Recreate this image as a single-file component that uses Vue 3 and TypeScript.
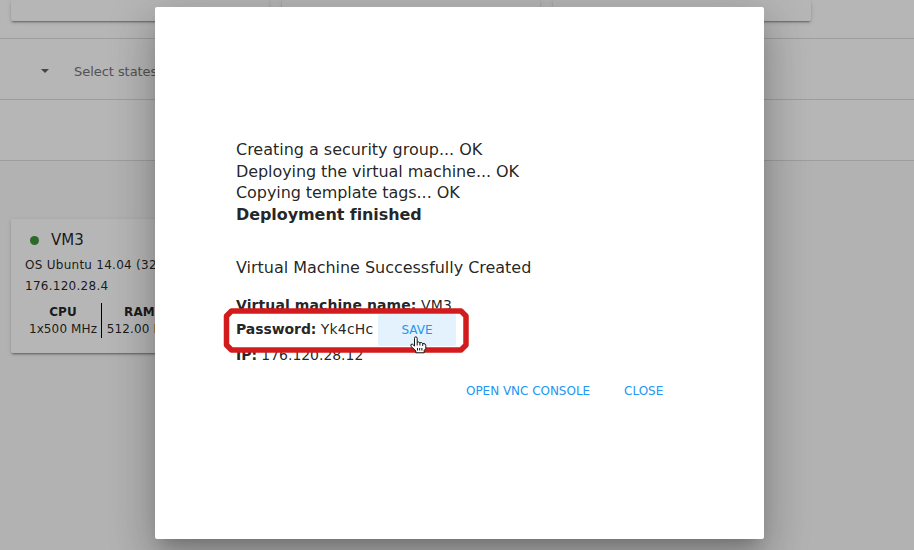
<script setup lang="ts">
interface Stat {
  label: string
  value: string
}

const steps: string[] = [
  'Creating a security group... OK',
  'Deploying the virtual machine... OK',
  'Copying template tags... OK',
]

const stats: Stat[] = [
  { label: 'CPU', value: '1x500 MHz' },
  { label: 'RAM', value: '512.00 MB' },
]

const topCards: number[] = [1, 2, 3]
</script>

<template>
  <div class="screen">
    <main class="page">
      <section class="toolbar">
        <div class="card-row">
          <div v-for="card in topCards" :key="card" class="card top-card"></div>
        </div>
        <div class="filter">
          <span class="caret"></span>
          <span class="placeholder">Select states</span>
        </div>
        <div class="filter"></div>
      </section>
      <article class="card vm">
        <h3 class="vm-name"><span class="dot"></span>VM3</h3>
        <p class="vm-line">OS Ubuntu 14.04 (32-bit)</p>
        <p class="vm-line">176.120.28.4</p>
        <div class="stats">
          <div v-for="stat in stats" :key="stat.label" class="stat">
            <b>{{ stat.label }}</b>
            <span>{{ stat.value }}</span>
          </div>
        </div>
      </article>
    </main>

    <div class="backdrop">
      <section class="dialog" role="dialog">
        <div class="steps">
          <div v-for="step in steps" :key="step">{{ step }}</div>
          <b>Deployment finished</b>
        </div>
        <p class="success">Virtual Machine Successfully Created</p>
        <div class="info name"><b>Virtual machine name:</b> VM3</div>
        <div class="info password">
          <span class="secret"><b>Password:</b> <span class="value">Yk4cHc</span></span>
          <button class="save" type="button">SAVE</button>
          <svg class="highlight" width="246" height="46" viewBox="0 0 246 46">
            <path d="M8.500 3H238L243 8V37L238 42H8.500L3.500 37V8Z" />
          </svg>
          <svg class="pointer" width="17" height="18" viewBox="0 0 17 18">
            <path d="M4.500 10V2.500Q4.500 .8 5.800 .8T7.200 2.500V6.500Q8.800 5.200 9.900 6.800Q11.500 5.900 12.700 7.500Q15.800 7.200 15.800 9.500V12.500L14.200 14.500V16.800H5.800V14.800L1 10.500Q.2 8 2.200 8L4.500 10" />
            <path d="M7.200 6.500V9.500M9.900 7V9.500M12.700 7.500V10M7.500 12V14.500M9.700 12V14.500M11.900 12V14.500" />
          </svg>
        </div>
        <div class="info ip"><b>IP:</b> 176.120.28.12</div>
        <div class="actions">
          <button type="button">OPEN VNC CONSOLE</button>
          <button type="button">CLOSE</button>
        </div>
      </section>
    </div>
  </div>
</template>

<style>
body {
  margin: 0;
  overflow: hidden;
}
</style>

<style scoped>
.screen {
  position: relative;
  width: 914px;
  height: 550px;
  overflow: hidden;
  color: rgba(0, 0, 0, 0.87);
  font-family: "DejaVu Sans", sans-serif;
}
.screen * {
  box-sizing: border-box;
}
.page {
  height: 550px;
  background: #fafafa;
}
.toolbar {
  background: #fff;
}
.card {
  background: #fff;
  border-radius: 2px;
  box-shadow: 0 3px 1px -2px rgba(0, 0, 0, 0.2), 0 2px 2px rgba(0, 0, 0, 0.14), 0 1px 5px rgba(0, 0, 0, 0.12);
}
.card-row {
  display: flex;
  gap: 12.5px;
  height: 39px;
  padding: 0 11px 17px;
  border-bottom: 1px solid #dcdcdc;
}
.top-card {
  width: 258.3px;
  height: 21px;
}
.filter {
  display: flex;
  align-items: center;
  height: 61px;
  padding: 5px 0 0 41px;
  border-bottom: 1px solid #dcdcdc;
}
.caret {
  margin-top: -1px;
  border: 4px solid transparent;
  border-top-color: #616161;
  border-bottom: 0;
}
.filter:last-child {
  padding: 0;
}
.placeholder {
  margin-left: 25px;
  color: #757575;
  font-size: 13px;
  letter-spacing: -0.05px;
}
.vm {
  width: 259px;
  height: 134px;
  margin: 58px 0 0 11px;
  padding: 10px 14px;
}
.vm-name {
  display: flex;
  align-items: center;
  height: 22px;
  margin: 0 0 4px;
  font-size: 15px;
  font-weight: 400;
}
.dot {
  width: 9px;
  height: 9px;
  margin: 1px 12px 0 5px;
  border-radius: 50%;
  background: #3c963e;
}
.vm-line {
  margin: 0;
  font-size: 12px;
  letter-spacing: 0.27px;
  line-height: 21px;
  white-space: nowrap;
}
.stats {
  display: flex;
  margin-top: 6px;
  font-size: 12px;
  letter-spacing: 0.12px;
  line-height: 17px;
}
.stat {
  display: flex;
  flex-direction: column;
  width: 76px;
  height: 35px;
  padding-top: 1px;
  text-align: center;
  white-space: nowrap;
}
.stat + .stat {
  border-left: 1px solid #000;
}
.backdrop {
  position: absolute;
  inset: 0;
  padding: 7px 0 0 155px;
  background: rgba(0, 0, 0, 0.288);
}
.dialog {
  width: 609px;
  height: 532px;
  padding: 132px 81px 0;
  border-radius: 2px;
  background: #fff;
  box-shadow: 0 11px 15px -7px rgba(0, 0, 0, 0.2), 0 24px 38px 3px rgba(0, 0, 0, 0.14), 0 9px 46px 8px rgba(0, 0, 0, 0.12);
}
.steps {
  font-size: 16px;
  letter-spacing: -0.08px;
  line-height: 21.6px;
}
.steps div:first-child {
  letter-spacing: -0.02px;
}
.success {
  margin: 32px 0 0;
  font-size: 16px;
  letter-spacing: -0.03px;
  line-height: 22px;
}
.info {
  margin-top: 17px;
  font-size: 14px;
  line-height: 18px;
}
.name {
  letter-spacing: 0.09px;
}
.password {
  position: relative;
  display: flex;
  align-items: center;
  height: 32px;
  margin-top: 0;
}
.secret {
  width: 138px;
  padding-bottom: 2px;
  letter-spacing: -0.08px;
}
.value {
  letter-spacing: 0.2px;
}
button {
  padding: 0;
  border: 0;
  background: none;
  color: #2196f3;
  font-family: inherit;
  font-size: 12px;
}
.save {
  width: 78px;
  height: 32px;
  margin-left: 4px;
  border-radius: 2px;
  background: #e3f2fd;
}
.highlight {
  position: absolute;
  top: -6px;
  left: -13.5px;
  fill: none;
  stroke: #d31b1d;
  stroke-width: 5.5;
  stroke-linejoin: round;
}
.pointer {
  position: absolute;
  top: 22px;
  left: 174px;
  fill: #fff;
  stroke: #111;
  stroke-width: 1;
}
.ip {
  margin-top: 0;
  letter-spacing: -0.04px;
}
.actions {
  display: flex;
  gap: 34px;
  margin: 18px 0 0 230px;
}
.actions button {
  letter-spacing: -0.03px;
  line-height: 18px;
}
</style>
